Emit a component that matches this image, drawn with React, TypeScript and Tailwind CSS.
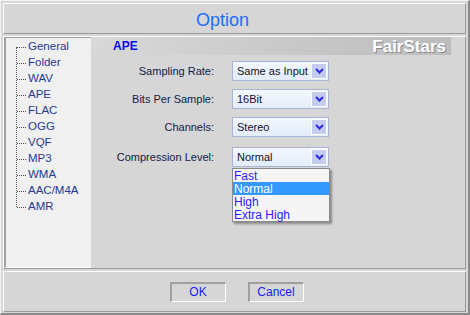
import React from "react";

const treeItems = ["General", "Folder", "WAV", "APE", "FLAC", "OGG", "VQF", "MP3", "WMA", "AAC/M4A", "AMR"];

function Chevron() {
  return (
    <svg width="9" height="6" viewBox="0 0 9 6">
      <path d="M1 1 L4.5 4.5 L8 1" fill="none" stroke="#2a2ae0" strokeWidth="2" />
    </svg>
  );
}

function Select({ value }: { value: string }) {
  return (
    <div className="w-[97px] h-[20px] border border-[#a8b4d8] bg-gradient-to-b from-[#f4f8fe] to-[#e2ecfb] flex items-center pl-[4px] pr-[1px]">
      <span className="flex-1 text-[11px] text-[#10102a] leading-none whitespace-nowrap overflow-hidden">{value}</span>
      <div className="w-[16px] h-[16px] shrink-0 bg-[#c4cdf0] border border-white flex items-center justify-center">
        <Chevron />
      </div>
    </div>
  );
}

export default function App() {
  const font = { fontFamily: '"Liberation Sans", Arial, sans-serif' };
  return (
    <div
      style={font}
      className="w-[470px] h-[315px] bg-[#d6d6d6] border-l border-t border-l-[#f4f4f4] border-t-[#f4f4f4] border-r-2 border-b-2 border-r-[#8a8a8a] border-b-[#8a8a8a] flex flex-col px-[2px] pt-[2px] pb-[1px]"
    >
      <div className="h-[31px] shrink-0 border-t border-l border-white border-r border-b border-r-[#9a9a9a] border-b-[#9a9a9a] flex items-center justify-center pr-[24px]">
        <span className="text-[18px] text-[#1a6cff] leading-none mt-[2px]">Option</span>
      </div>
      <div className="h-[233px] mt-[2px] shrink-0 border-t border-l border-white border-r border-b border-r-[#9a9a9a] border-b-[#9a9a9a] flex">
        <div className="w-[87px] shrink-0 bg-[#f0f0f0] border-l-2 border-t border-[#a0a0a0] border-b border-b-white relative">
          <div className="absolute left-[10px] top-[9px] h-[160px] border-l border-dotted border-[#555]" />
          <div className="flex flex-col pt-[1px]">
            {treeItems.map((t) => (
              <div key={t} className="h-[16px] flex items-center">
                <div className="w-[9px] ml-[11px] border-t border-dotted border-[#555]" />
                <span className="ml-[2px] text-[11.5px] text-[#1c3a94] leading-none">{t}</span>
              </div>
            ))}
          </div>
        </div>
        <div className="flex-1 flex flex-col pl-[1px]">
          <div className="h-[18px] w-[359px] bg-gradient-to-r from-[#d8d8d8] to-[#bcbcbc] flex items-center justify-between pl-[21px] pr-[5px]">
            <span className="text-[12px] font-bold text-[#0a0ae8] leading-none">APE</span>
            <span className="text-[17px] font-bold text-white leading-none [text-shadow:1px_1px_0_#8a8a8a]">FairStars</span>
          </div>
          <div className="grid grid-cols-[122px_97px] gap-x-[18px] mt-[6px]">
            <span className="text-right text-[11px] text-[#10204a] self-center">Sampling Rate:</span>
            <Select value="Same as Input" />
            <span className="text-right text-[11px] text-[#10204a] self-center mt-[8px]">Bits Per Sample:</span>
            <div className="mt-[8px]"><Select value="16Bit" /></div>
            <span className="text-right text-[11px] text-[#10204a] self-center mt-[8px]">Channels:</span>
            <div className="mt-[8px]"><Select value="Stereo" /></div>
            <span className="text-right text-[11px] text-[#10204a] self-center mt-[10px]">Compression Level:</span>
            <div className="mt-[10px] relative">
              <Select value="Normal" />
              <div className="absolute left-0 top-[21px] w-[98px] bg-[#f5f5f5] border border-[#8a8a8a] shadow-[2px_2px_2px_rgba(0,0,0,0.35)] flex flex-col z-10">
                {["Fast", "Normal", "High", "Extra High"].map((o) => (
                  <div
                    key={o}
                    className={
                      o === "Normal"
                        ? "h-[13px] flex items-center pl-[1px] bg-[#3399ff] text-white text-[12px] leading-none"
                        : "h-[13px] flex items-center pl-[1px] text-[#2a1aff] text-[12px] leading-none"
                    }
                  >
                    {o}
                  </div>
                ))}
              </div>
            </div>
          </div>
        </div>
      </div>
      <div className="flex-1 mt-[2px] border-t border-l border-white border-r border-b border-r-[#9a9a9a] border-b-[#9a9a9a] flex items-center justify-center gap-[22px] pl-[4px]">
        <button className="w-[56px] h-[20px] border-t-2 border-l-2 border-[#a0a0a0] border-r border-b border-r-white border-b-white text-[12px] text-[#1a1aff] leading-none">OK</button>
        <button className="w-[56px] h-[20px] border-t-2 border-l-2 border-[#a0a0a0] border-r border-b border-r-white border-b-white text-[12px] text-[#1a1aff] leading-none">Cancel</button>
      </div>
    </div>
  );
}
